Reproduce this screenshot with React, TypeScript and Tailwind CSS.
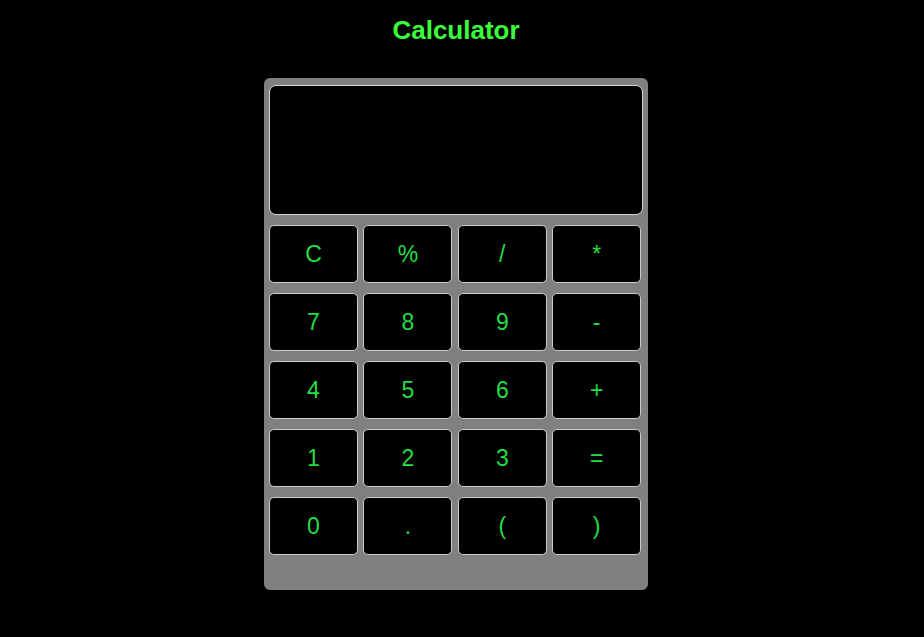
import React from "react";

const keys = [
  "C", "%", "/", "*",
  "7", "8", "9", "-",
  "4", "5", "6", "+",
  "1", "2", "3", "=",
  "0", ".", "(", ")",
];

export default function App() {
  return (
    <div
      className="min-h-screen bg-black w-full"
      style={{ fontFamily: '"Liberation Sans", Arial, sans-serif' }}
    >
      <div className="w-[912px] flex flex-col items-center">
        {/* Title */}
        <h1 className="mt-[15px] text-[26px] leading-[30px] font-bold text-[#3aff3a]">
          Calculator
        </h1>

        {/* Calculator body */}
        <div className="mt-[33px] w-[384px] h-[512px] bg-[#808080] rounded-[6px] pt-[7px] px-[5px]">
          <div className="h-[130px] bg-black border border-[#d8d5ce] rounded-[7px]" />

          <div className="mt-[10px] grid grid-cols-[repeat(4,89px)] gap-x-[5.4px] gap-y-[10px]">
            {keys.map((k) => (
              <button
                key={k}
                className="h-[58px] bg-black border border-[#cfcbc2] rounded-[5px] text-[23px] text-[#22dd44] flex items-center justify-center"
              >
                {k}
              </button>
            ))}
          </div>
        </div>
      </div>
    </div>
  );
}
